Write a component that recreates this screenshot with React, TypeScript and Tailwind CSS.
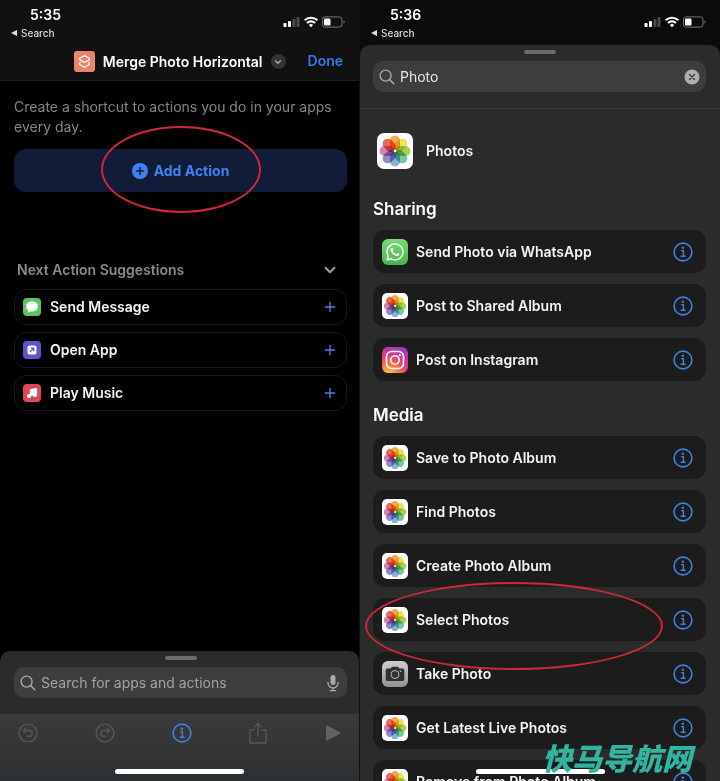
import { useState } from "react";
import type { ReactNode } from "react";
import { ChevronDown, Music, Plus } from "lucide-react";
import { FaWhatsapp } from "react-icons/fa";

type AppIconName = "photos" | "whatsapp" | "instagram" | "camera";

type Action = {
  label: string;
  icon: AppIconName;
  highlighted?: boolean;
};

const SHARING: Action[] = [
  { label: "Send Photo via WhatsApp", icon: "whatsapp" },
  { label: "Post to Shared Album", icon: "photos" },
  { label: "Post on Instagram", icon: "instagram" },
];

const MEDIA: Action[] = [
  { label: "Save to Photo Album", icon: "photos" },
  { label: "Find Photos", icon: "photos" },
  { label: "Create Photo Album", icon: "photos" },
  { label: "Select Photos", icon: "photos", highlighted: true },
  { label: "Take Photo", icon: "camera" },
  { label: "Get Latest Live Photos", icon: "photos" },
  { label: "Remove from Photo Album", icon: "photos" },
];

// clockwise from the top
const PETALS = ["#f3ab4a", "#ebe25a", "#a8cf5a", "#7cc4a4", "#84b2de", "#958ac6", "#cc86b6", "#ee6a56"];

function StatusBar({ time }: { time: string }) {
  return (
    <div className="flex h-10 shrink-0 items-start justify-between">
      <div className="pt-[5px] pl-[11px]">
        <div className="pl-[19px] text-sm leading-5 font-semibold text-white">{time}</div>
        <a href="#search" className="flex items-center gap-1 text-[10px] leading-4 font-medium text-[#dedede]">
          <svg viewBox="0 0 6 6" className="h-1.5 w-1.5" fill="currentColor" aria-hidden="true">
            <path d="M6 0v6L0 3z" />
          </svg>
          Search
        </a>
      </div>
      <svg viewBox="0 0 62 12" className="mt-4 mr-3.5 h-3 w-[62px]" aria-hidden="true">
        <rect x="0.5" y="7" width="3" height="4" rx="0.8" fill="#fff" />
        <rect x="5" y="5" width="3" height="6" rx="0.8" fill="#fff" />
        <rect x="9.5" y="3" width="3" height="8" rx="0.8" fill="#4a4a4a" />
        <rect x="13.5" y="1" width="3" height="10" rx="0.8" fill="#4a4a4a" />
        <g fill="none" stroke="#fff" strokeWidth="2.1">
          <path d="M21.6 4.3a9.2 9.2 0 0 1 12.8 0" />
          <path d="M24 7a5.7 5.7 0 0 1 8 0" />
        </g>
        <path d="M28 11.2 25.9 9a3 3 0 0 1 4.2 0z" fill="#fff" />
        <rect x="39.5" y="0.9" width="19.5" height="10.2" rx="2.8" fill="none" stroke="#777" />
        <rect x="41" y="2.4" width="6.5" height="7.2" rx="1.4" fill="#fff" />
        <path d="M60.5 4.5v3q1.2-.4 1.2-1.5t-1.2-1.5" fill="#777" />
      </svg>
    </div>
  );
}

function SearchIcon() {
  return (
    <svg viewBox="0 0 16 16" className="h-4 w-4 shrink-0 text-[#a9a9a9]" fill="none" stroke="currentColor" strokeLinecap="round" aria-hidden="true">
      <circle cx="6.6" cy="6.6" r="5.5" strokeWidth="1.4" />
      <path d="m10.8 10.8 4 4" strokeWidth="1.6" />
    </svg>
  );
}

function InfoIcon({ className }: { className?: string }) {
  return (
    <svg viewBox="0 0 20 20" className={className} fill="none" stroke="currentColor" aria-hidden="true">
      <circle cx="10" cy="10" r="8.9" strokeWidth="1.6" />
      <circle cx="9.8" cy="5.7" r="1.2" fill="currentColor" stroke="none" />
      <path d="M8 8.6h2.4v5.6M7.6 14.3h5" strokeWidth="1.4" />
    </svg>
  );
}

function PhotosIcon({ className }: { className?: string }) {
  return (
    <svg viewBox="0 0 36 36" className={className} aria-hidden="true">
      <rect width="36" height="36" rx="7" fill="#fff" />
      <g transform="translate(18 18)">
        {PETALS.map((color, i) => (
          <rect
            key={color}
            x="-5"
            y="-15.4"
            width="10"
            height="14.6"
            rx="5"
            fill={color}
            transform={`rotate(${i * 45})`}
            className="mix-blend-multiply"
          />
        ))}
        <circle r="1.2" fill="#fff" />
      </g>
    </svg>
  );
}

function AppIcon({ name }: { name: AppIconName }) {
  if (name === "photos") return <PhotosIcon className="h-[26px] w-[26px] shrink-0" />;
  if (name === "whatsapp") {
    return (
      <span className="flex h-[26px] w-[26px] shrink-0 items-center justify-center rounded-md bg-linear-to-b from-[#7ddb78] to-[#45b549]">
        <FaWhatsapp className="h-5 w-5 text-white" />
      </span>
    );
  }
  if (name === "instagram") {
    return (
      <span className="flex h-[26px] w-[26px] shrink-0 items-center justify-center rounded-md bg-[radial-gradient(circle_at_25%_105%,#fdc850_0%,#f77b3c_30%,#e0358a_58%,#7c3bdd_100%)]">
        <svg viewBox="0 0 20 20" className="h-5 w-5" fill="none" stroke="#fff" strokeWidth="1.6" aria-hidden="true">
          <rect x="1.5" y="1.5" width="17" height="17" rx="5" />
          <circle cx="10" cy="10" r="4.2" />
          <circle cx="14.8" cy="5.2" r="1.1" fill="#fff" stroke="none" />
        </svg>
      </span>
    );
  }
  return (
    <span className="flex h-[26px] w-[26px] shrink-0 items-center justify-center rounded-md bg-linear-to-b from-[#cfcfcf] to-[#929292]">
      <svg viewBox="0 0 20 16" className="h-4 w-5" aria-hidden="true">
        <path
          d="M2.5 2.5h3L7 .8h6l1.5 1.7h3a1.8 1.8 0 0 1 1.8 1.8v9a1.8 1.8 0 0 1-1.8 1.8h-15a1.8 1.8 0 0 1-1.8-1.8v-9a1.8 1.8 0 0 1 1.8-1.8"
          fill="#303030"
        />
        <circle cx="10" cy="8.5" r="4" fill="none" stroke="#b8b8b8" />
        <circle cx="15.5" cy="5.3" r="0.8" fill="#c8c8c8" />
      </svg>
    </span>
  );
}

function ActionRow({ action }: { action: Action }) {
  return (
    <li className="relative flex h-[43px] shrink-0 items-center rounded-xl bg-[#1c1c1c] pr-[13px] pl-[9px]">
      <button type="button" className="flex flex-1 items-center gap-2 text-left text-[14px] leading-5 font-semibold text-[#f4f4f4]">
        <AppIcon name={action.icon} />
        {action.label}
      </button>
      <button type="button" aria-label={`About ${action.label}`} className="text-[#4180dc]">
        <InfoIcon className="h-5 w-5" />
      </button>
      {action.highlighted && (
        <span className="pointer-events-none absolute -top-4 -left-2 z-10 h-[88px] w-[298px] rounded-[50%] border-2 border-[#cc2936]" />
      )}
    </li>
  );
}

function ActionSection({ title, actions }: { title: string; actions: Action[] }) {
  return (
    <section>
      <h2 className="text-[17px] leading-6 font-semibold text-white">{title}</h2>
      <ul className="mt-[9px] flex flex-col gap-[11px]">
        {actions.map((a) => (
          <ActionRow key={a.label} action={a} />
        ))}
      </ul>
    </section>
  );
}

function SuggestionRow({ label, children }: { label: string; children: ReactNode }) {
  return (
    <li>
      <button
        type="button"
        className="flex h-9 w-full items-center gap-[9px] rounded-xl border border-[#191919] px-2 text-[14px] leading-5 font-semibold text-[#f4f4f4]"
      >
        {children}
        <span className="flex-1 text-left">{label}</span>
        <Plus className="h-4 w-4 text-[#4480ee]" strokeWidth={2} />
      </button>
    </li>
  );
}

function EditorPhone() {
  return (
    <div className="flex h-full flex-col overflow-hidden border-r border-[#111] bg-black">
      <header className="shrink-0 border-b border-[#1c1c1c] bg-[#111]">
        <StatusBar time="5:35" />
        <div className="flex h-10 items-start justify-end gap-[22px] pt-[11px] pr-4">
          <h1>
            <button type="button" className="flex items-center gap-2 text-[14px] leading-5 font-semibold text-white">
              <svg viewBox="0 0 21 21" className="h-[21px] w-[21px]" aria-hidden="true">
                <rect width="21" height="21" rx="3" fill="#e8866b" />
                <g fill="none" stroke="#fff" strokeWidth="1.2" strokeLinejoin="round" strokeLinecap="round">
                  <path d="M9.7 5.100q.8-.4 1.600 0l3.300 1.700q.9.500.9 1.200t-.9 1.200l-3.300 1.900q-.8.400-1.600 0L6.400 9.200q-.9-.5-.9-1.200t.9-1.200z" />
                  <path d="M6.400 11.400q-.9.500-.9 1.300t.9 1.300l3.300 1.900q.8.400 1.600 0l3.300-1.900q.9-.5.9-1.300t-.9-1.300" />
                </g>
              </svg>
              Merge Photo Horizontal
              <span className="flex h-[15px] w-[15px] items-center justify-center rounded-full bg-[#333]">
                <ChevronDown className="h-2.5 w-2.5 text-[#b0b0b0]" strokeWidth={3} />
              </span>
            </button>
          </h1>
          <button type="button" className="text-[14px] leading-5 font-semibold text-[#2f7bea]">
            Done
          </button>
        </div>
      </header>

      <main className="flex-1 pt-4 pr-3 pl-3.5">
        <p className="text-[14px] leading-5 text-[#848484]">Create a shortcut to actions you do in your apps every day.</p>
        <div className="relative mt-3">
          <button
            type="button"
            className="flex h-[43px] w-full items-center justify-center gap-1.5 rounded-xl bg-[#121c39] text-[14px] leading-5 font-bold text-[#3d82f4]"
          >
            <svg viewBox="0 0 16 16" className="h-4 w-4" aria-hidden="true">
              <circle cx="8" cy="8" r="8" fill="currentColor" />
              <path d="M8 4.5v7M4.5 8h7" stroke="#121c39" strokeWidth="1.5" strokeLinecap="round" />
            </svg>
            Add Action
          </button>
          <span className="pointer-events-none absolute inset-x-0 -top-[23px] mx-auto h-[87px] w-40 rounded-[50%] border-2 border-[#cc2936]" />
        </div>

        <h2 className="mt-[68px]">
          <button
            type="button"
            className="flex w-full items-center justify-between pr-2 pl-[3px] text-[14px] leading-5 font-semibold text-[#898989]"
          >
            Next Action Suggestions
            <ChevronDown className="h-[18px] w-[18px] text-[#a0a0a0]" strokeWidth={2.5} />
          </button>
        </h2>
        <ul className="mt-[9px] flex flex-col gap-[7px]">
          <SuggestionRow label="Send Message">
            <svg viewBox="0 0 18 18" className="h-[18px] w-[18px]" aria-hidden="true">
              <rect width="18" height="18" rx="4" fill="#5dc457" />
              <ellipse cx="9" cy="8.4" rx="6" ry="5.2" fill="#fff" />
              <path d="M5.5 11.5q.2 2-1.2 3 2.200 0 3.500-1.500z" fill="#fff" />
            </svg>
          </SuggestionRow>
          <SuggestionRow label="Open App">
            <svg viewBox="0 0 18 18" className="h-[18px] w-[18px]" aria-hidden="true">
              <rect width="18" height="18" rx="4" fill="#5d56d0" />
              <rect x="4.5" y="4.5" width="9" height="9" rx="2" fill="#fff" />
              <path d="m7 11 3.600-3.600M7.800 7.200h3v3" fill="none" stroke="#5d56d0" strokeWidth="1.2" />
            </svg>
          </SuggestionRow>
          <SuggestionRow label="Play Music">
            <span className="flex h-[18px] w-[18px] items-center justify-center rounded bg-[#dc4658]">
              <Music className="h-3 w-3 fill-white text-white" strokeWidth={2.5} />
            </span>
          </SuggestionRow>
        </ul>
      </main>

      <div className="shrink-0 rounded-t-[10px] bg-[#2b2b2c] pt-[5px] pr-3 pb-4 pl-3.5">
        <div className="mx-auto h-1 w-8 rounded-full bg-[#6b6b6b]" />
        <label className="mt-[7px] flex h-[31px] items-center gap-[5px] rounded-[10px] bg-[#3d3d3f] px-1.5">
          <SearchIcon />
          <input
            type="text"
            aria-label="Search for apps and actions"
            placeholder="Search for apps and actions"
            className="min-w-0 flex-1 bg-transparent text-[14px] leading-5 text-white outline-none placeholder:text-[#a3a3a3]"
          />
          <svg viewBox="0 0 16 18" className="h-[18px] w-4" fill="none" stroke="#a9a9a9" strokeWidth="1.3" aria-hidden="true">
            <rect x="5.5" y="1" width="5" height="10" rx="2.5" fill="#a9a9a9" stroke="none" />
            <path d="M3 8v1a5 5 0 0 0 10 0V8M8 14v2.400M4.800 16.600h6.400" />
          </svg>
        </label>
      </div>

      <footer className="shrink-0 bg-linear-to-b from-[#3a3a3a] to-[#2d3032] px-[18px] pt-2 pb-[7px]">
        <div className="flex items-center justify-between text-[#565656]">
          <button type="button" aria-label="Undo">
            <svg viewBox="0 0 20 20" className="h-5 w-5" fill="none" stroke="currentColor" strokeWidth="1.4" aria-hidden="true">
              <circle cx="10" cy="10" r="8.9" />
              <path d="M8 5 5.500 7.500 8 10M5.800 7.500h5.500a2.900 2.900 0 0 1 0 5.800H8.500" />
            </svg>
          </button>
          <button type="button" aria-label="Redo">
            <svg viewBox="0 0 20 20" className="h-5 w-5" fill="none" stroke="currentColor" strokeWidth="1.4" aria-hidden="true">
              <circle cx="10" cy="10" r="8.9" />
              <path d="m12 5 2.500 2.500L12 10M14.200 7.500H8.700a2.900 2.900 0 0 0 0 5.800h2.800" />
            </svg>
          </button>
          <button type="button" aria-label="Details" className="text-[#4180dc]">
            <InfoIcon className="h-5 w-5" />
          </button>
          <button type="button" aria-label="Share">
            <svg viewBox="0 0 20 22" className="h-[22px] w-5" fill="none" stroke="currentColor" strokeWidth="1.4" aria-hidden="true">
              <path d="M7 8H2v13h16V8h-5M10 14.500V1.500M6.500 5 10 1.500 13.500 5" />
            </svg>
          </button>
          <button type="button" aria-label="Run">
            <svg viewBox="0 0 16 20" className="h-5 w-4" fill="#626262" aria-hidden="true">
              <path d="M1 3.200q0-1.200 1.100-.6L15 9.200q1 .8 0 1.500L2.100 17.400q-1.100.5-1.100-.6z" />
            </svg>
          </button>
        </div>
        <div className="mx-auto mt-[25px] h-[5px] w-[129px] rounded-full bg-white" />
      </footer>
    </div>
  );
}

function SearchPhone() {
  const [query, setQuery] = useState("Photo");

  return (
    <div className="relative flex h-full flex-col overflow-hidden bg-[#0b0b0b]">
      <div className="h-[45px] shrink-0">
        <StatusBar time="5:36" />
      </div>
      <div className="flex min-h-0 flex-1 flex-col rounded-t-[10px] bg-[#2b2b2b]">
        <div className="shrink-0 border-b border-[#3c3c3c] pt-[5px] pr-3.5 pb-4 pl-[13px]">
          <div className="mx-auto h-1 w-8 rounded-full bg-[#6b6b6b]" />
          <label className="mt-[7px] flex h-[31px] items-center gap-[5px] rounded-[10px] bg-[#3d3d3f] px-1.5">
            <SearchIcon />
            <input
              type="text"
              aria-label="Search actions"
              value={query}
              onChange={(e) => setQuery(e.target.value)}
              className="min-w-0 flex-1 bg-transparent text-[14px] leading-5 text-[#e6e6e6] outline-none"
            />
            <button type="button" aria-label="Clear search" onClick={() => setQuery("")}>
              <svg viewBox="0 0 16 16" className="h-4 w-4" aria-hidden="true">
                <circle cx="8" cy="8" r="7.5" fill="#b0b0b0" />
                <path d="m5.500 5.500 5 5m0-5-5 5" stroke="#3d3d3f" strokeWidth="1.4" strokeLinecap="round" />
              </svg>
            </button>
          </label>
        </div>

        <main className="min-h-0 flex-1 overflow-hidden pt-6 pr-3.5 pl-[13px]">
          <button type="button" className="flex items-center gap-[13px] pl-1 text-[14px] leading-5 font-semibold text-[#f4f4f4]">
            <PhotosIcon className="h-9 w-9" />
            Photos
          </button>
          <div className="mt-[28px] flex flex-col gap-[22px]">
            <ActionSection title="Sharing" actions={SHARING} />
            <ActionSection title="Media" actions={MEDIA} />
          </div>
        </main>
      </div>
      <div className="absolute inset-x-0 bottom-[7px] mx-auto h-[5px] w-[129px] rounded-full bg-white" />
      <div className="absolute right-7 bottom-2 z-20 font-['Noto_Sans_CJK_SC',sans-serif] text-[30px] leading-8 font-black text-[#32b5a0] italic">
        快马导航网
      </div>
    </div>
  );
}

export default function App() {
  return (
    <div className="grid h-screen grid-cols-2 overflow-hidden bg-black font-['Inter',sans-serif]">
      <EditorPhone />
      <SearchPhone />
    </div>
  );
}
